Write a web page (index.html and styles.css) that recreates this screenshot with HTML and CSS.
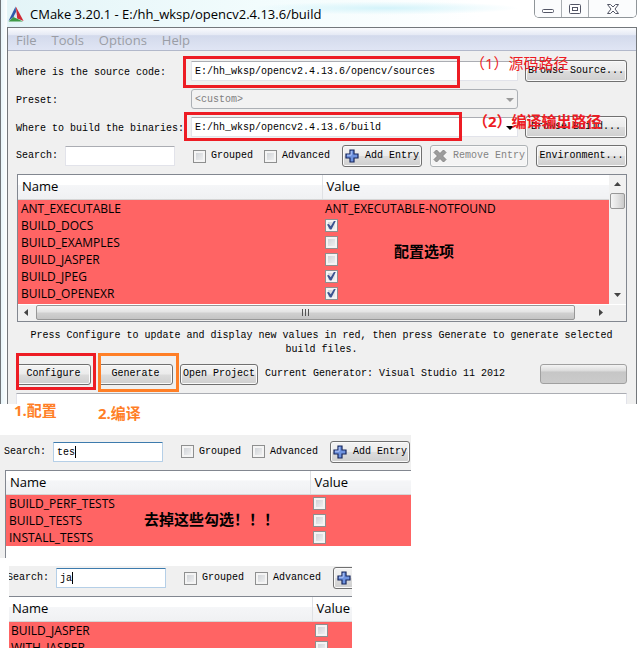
FILE: index.html
```html
<!DOCTYPE html>
<html lang="zh-CN">
<head>
    <meta charset="UTF-8">
    <meta name="viewport" content="width=device-width, initial-scale=1.0">
    <title>CMake 3.20.1 - OpenCV</title>
    <link rel="stylesheet" href="styles.css">
</head>
<body>
    <svg width="0" height="0" class="defs">
        <symbol id="plus" viewBox="0 0 14 14">
            <path d="M5 1h4v4h4v4H9v4H5V9H1V5h4z" fill="#6f93e0" stroke="#16265c" stroke-width="1.2"/>
            <path d="M6.2 2v4.2H2" fill="none" stroke="#b4c9f7"/>
        </symbol>
    </svg>

    <div class="window">
        <div class="titlebar">
            <svg class="logo" width="16" height="16" viewBox="0 0 16 16">
                <path d="M7.6 0.5L0.5 15l7.800-6.200z" fill="#2f58a8"/>
                <path d="M7.8 0.5L15.6 15 9.2 12.6z" fill="#cf2a35"/>
                <path d="M0.5 15.4l5-4.400L15 15.4z" fill="#3f9a46"/>
                <path d="M8 6l1 6-3.400-1.400z" fill="#dfe6ee"/>
            </svg>
            <h1 class="title">CMake 3.20.1 - E:/hh_wksp/opencv2.4.13.6/build</h1>
            <div class="controls">
                <button class="control" aria-label="Minimize">
                    <svg width="14" height="12" viewBox="0 0 14 12"><rect x="1.5" y="6.5" width="11" height="3" rx="1" fill="#fff" stroke="#535666"/></svg>
                </button>
                <button class="control" aria-label="Maximize">
                    <svg width="14" height="12" viewBox="0 0 14 12"><rect x="1.5" y="1.5" width="11" height="9" rx="1" fill="#fff" stroke="#535666"/><rect x="4.5" y="4.5" width="5" height="3" fill="#fff" stroke="#535666"/></svg>
                </button>
                <button class="control control-close" aria-label="Close">
                    <svg width="14" height="12" viewBox="0 0 14 12"><path d="M1.5 1.5h3L7 4l2.500-2.500h3L9 6l3.500 4.500h-3L7 8l-2.500 2.500h-3L5 6z" fill="#fff" stroke="#535666"/></svg>
                </button>
            </div>
        </div>

        <div class="client">
            <nav class="menubar">
                <a href="#">File</a>
                <a href="#">Tools</a>
                <a href="#">Options</a>
                <a href="#">Help</a>
            </nav>

            <div class="content">
                <div class="paths">
                    <label for="source">Where is the source code:</label>
                    <div class="field">
                        <input class="textbox" id="source" type="text" value="E:/hh_wksp/opencv2.4.13.6/opencv/sources">
                        <div class="mark mark-source"></div>
                        <span class="note note-source">（1）源码路径</span>
                    </div>
                    <button class="btn">Browse Source...</button>

                    <label for="preset">Preset:</label>
                    <div class="field combo combo-disabled">
                        <select class="textbox" id="preset" disabled><option>&lt;custom&gt;</option></select>
                    </div>
                    <span></span>

                    <label for="binaries">Where to build the binaries:</label>
                    <div class="field combo">
                        <select class="textbox" id="binaries"><option>E:/hh_wksp/opencv2.4.13.6/build</option></select>
                        <div class="mark mark-build"></div>
                        <span class="note note-build">（2）编译输出路径</span>
                    </div>
                    <button class="btn">Browse Build...</button>
                </div>

                <div class="toolbar">
                    <label class="search-label" for="search1">Search:</label>
                    <div class="search"><input class="textbox" id="search1" type="text"></div>
                    <label class="check"><input type="checkbox">Grouped</label>
                    <label class="check"><input type="checkbox">Advanced</label>
                    <button class="btn btn-add"><svg width="14" height="14"><use href="#plus"/></svg>Add Entry</button>
                    <button class="btn btn-remove" disabled>
                        <svg width="14" height="14" viewBox="0 0 14 14"><path d="M1 3.500L3.500 1 7 4.500 10.500 1 13 3.500 9.500 7l3.500 3.500-2.500 2.500L7 9.500 3.500 13 1 10.500 4.500 7z" fill="#9c9c9c" stroke="#858585"/></svg>Remove Entry</button>
                    <button class="btn btn-env">Environment...</button>
                </div>

                <div class="cache">
                    <div class="cache-view">
                        <table class="entries">
                            <thead>
                                <tr><th class="name">Name</th><th>Value</th></tr>
                            </thead>
                            <tbody>
                                <tr><td>ANT_EXECUTABLE</td><td>ANT_EXECUTABLE-NOTFOUND</td></tr>
                                <tr><td>BUILD_DOCS</td><td><input type="checkbox" aria-label="BUILD_DOCS" checked></td></tr>
                                <tr><td>BUILD_EXAMPLES</td><td><input type="checkbox" aria-label="BUILD_EXAMPLES"></td></tr>
                                <tr><td>BUILD_JASPER</td><td><input type="checkbox" aria-label="BUILD_JASPER"></td></tr>
                                <tr><td>BUILD_JPEG</td><td><input type="checkbox" aria-label="BUILD_JPEG" checked></td></tr>
                                <tr><td>BUILD_OPENEXR</td><td><input type="checkbox" aria-label="BUILD_OPENEXR" checked></td></tr>
                            </tbody>
                        </table>
                        <span class="note note-options">配置选项</span>
                    </div>
                    <div class="vscroll">
                        <svg width="7" height="4" viewBox="0 0 7 4"><path d="M0 4l3.500-4L7 4z" fill="#444"/></svg>
                        <div class="vthumb"></div>
                        <svg class="down" width="7" height="4" viewBox="0 0 7 4"><path d="M0 0l3.500 4L7 0z" fill="#444"/></svg>
                    </div>
                    <div class="hscroll">
                        <svg width="4" height="7" viewBox="0 0 4 7"><path d="M4 0L0 3.500 4 7z" fill="#444"/></svg>
                        <div class="hthumb"><i></i><i></i><i></i></div>
                        <svg width="4" height="7" viewBox="0 0 4 7"><path d="M0 0l4 3.500L0 7z" fill="#444"/></svg>
                    </div>
                </div>

                <p class="hint">Press Configure to update and display new values in red, then press Generate to generate selected build files.</p>

                <div class="actions">
                    <div class="step">
                        <button class="btn">Configure</button>
                        <div class="mark mark-configure"></div>
                    </div>
                    <div class="step">
                        <button class="btn">Generate</button>
                        <div class="mark mark-generate"></div>
                    </div>
                    <button class="btn btn-open">Open Project</button>
                    <span>Current Generator: Visual Studio 11 2012</span>
                    <div class="progress"></div>
                </div>

                <div class="output"></div>
            </div>
        </div>
    </div>

    <div class="steps">
        <span class="note">1.配置</span>
        <span class="note note-second">2.编译</span>
    </div>

    <div class="panel panel-tests">
        <div class="toolbar">
            <label class="search-label" for="search2">Search:</label>
            <div class="search active"><input class="textbox" id="search2" type="text" value="tes"><i class="caret caret-tes"></i></div>
            <label class="check"><input type="checkbox">Grouped</label>
            <label class="check"><input type="checkbox">Advanced</label>
            <button class="btn btn-add"><svg width="14" height="14"><use href="#plus"/></svg>Add Entry</button>
        </div>
        <div class="result">
            <table class="entries">
                <thead>
                    <tr><th class="name">Name</th><th>Value</th></tr>
                </thead>
                <tbody>
                    <tr><td>BUILD_PERF_TESTS</td><td><input type="checkbox" aria-label="BUILD_PERF_TESTS"></td></tr>
                    <tr><td>BUILD_TESTS</td><td><input type="checkbox" aria-label="BUILD_TESTS"></td></tr>
                    <tr><td>INSTALL_TESTS</td><td><input type="checkbox" aria-label="INSTALL_TESTS"></td></tr>
                </tbody>
            </table>
            <span class="note note-uncheck">去掉这些勾选！！！</span>
        </div>
    </div>

    <div class="panel panel-jasper">
        <div class="toolbar">
            <label class="search-label" for="search3">Search:</label>
            <div class="search active"><input class="textbox" id="search3" type="text" value="ja"><i class="caret caret-ja"></i></div>
            <label class="check"><input type="checkbox">Grouped</label>
            <label class="check"><input type="checkbox">Advanced</label>
            <button class="btn btn-add" aria-label="Add Entry"><svg width="14" height="14"><use href="#plus"/></svg></button>
        </div>
        <div class="result">
            <table class="entries">
                <thead>
                    <tr><th class="name">Name</th><th>Value</th></tr>
                </thead>
                <tbody>
                    <tr><td>BUILD_JASPER</td><td><input type="checkbox" aria-label="BUILD_JASPER"></td></tr>
                    <tr><td>WITH_JASPER</td><td><input type="checkbox" aria-label="WITH_JASPER"></td></tr>
                </tbody>
            </table>
        </div>
    </div>
</body>
</html>
```
FILE: styles.css
```css
* {
    box-sizing: border-box;
}

body {
    margin: 0;
    height: 100vh;
    overflow: hidden;
    background: #fff;
    color: #000;
    font: 10px/14px "Liberation Mono", "Noto Sans CJK SC", monospace;
}

button, input, select {
    font: inherit;
    color: inherit;
    margin: 0;
}

.defs {
    position: absolute;
}

/* window frame */
.window {
    padding: 0 4px 0 6px;
    border-left: 1px solid #6f7478;
    background: linear-gradient(90deg, #e8f5fa, #fdfefe 6px, #fff);
}

.titlebar {
    display: flex;
    align-items: center;
    height: 27px;
    background: radial-gradient(ellipse at 60% 30%, #d3f3fa, transparent 25%), linear-gradient(90deg, #e3f4f7, #f2fcfd 40%, #fff 75%);
}

.logo {
    margin-left: 1px;
}

.title {
    flex: 1;
    margin: 0 0 0 6px;
    font: 13px/24px "Open Sans", sans-serif;
    white-space: nowrap;
}

.controls {
    display: flex;
    align-self: flex-start;
    height: 18px;
    border: 1px solid #8f9599;
    border-top: 0;
    border-radius: 0 0 5px 5px;
    overflow: hidden;
}

.control {
    display: flex;
    align-items: center;
    justify-content: center;
    width: 27px;
    padding: 0;
    border: 0;
    border-right: 1px solid #a9aeb2;
    background: #fbfcfd;
}

.control-close {
    width: 47px;
    border-right: 0;
}

.client {
    border: 1px solid #73777b;
    border-bottom: 0;
    background: #f0f0f0;
}

.menubar {
    display: flex;
    gap: 15px;
    height: 23px;
    padding-left: 8px;
    border-bottom: 1px solid #b2b8ca;
    background: linear-gradient(#fafbfd, #e6eaf5 30%, #d3daec 35%, #e0e5f4);
    font: 13px/24px "Open Sans", sans-serif;
}

.menubar a {
    color: #9a9da5;
    text-decoration: none;
}

.content {
    padding: 9px 9px 0 8px;
}

/* inputs */
.paths {
    display: grid;
    grid-template-columns: 168px 1fr 102px;
    column-gap: 7px;
    row-gap: 7px;
    align-items: center;
    white-space: nowrap;
}

.paths label {
    padding-top: 3px;
}

.field {
    position: relative;
}

.textbox {
    display: block;
    width: 100%;
    height: 20px;
    padding: 1px 3px 0;
    border: 1px solid #e2e3ea;
    border-top-color: #abadb3;
    border-radius: 1px;
    background: #fff;
    outline: 0;
    appearance: none;
}

.combo::after {
    content: "";
    position: absolute;
    right: 4px;
    top: 9px;
    border: 4px solid transparent;
    border-top-color: #000;
    border-bottom: 0;
}

.combo-disabled::after {
    border-top-color: #9a9a9a;
}

.combo-disabled .textbox {
    border-color: #acb0b5;
    border-radius: 3px;
    background: #f2f2f2;
    color: #7f7f7f;
    opacity: 1;
}

.btn {
    display: flex;
    align-items: center;
    justify-content: center;
    gap: 6px;
    height: 22px;
    padding: 0;
    border: 1px solid #707070;
    border-radius: 3px;
    background: linear-gradient(#f3f3f3, #ebebeb 48%, #dcdcdc 52%, #cfcfcf);
    box-shadow: inset 0 0 0 1px #fafafa;
    white-space: nowrap;
}

.btn:disabled {
    border-color: #adb2b5;
    background: #f4f4f4;
    color: #838383;
}

.toolbar {
    display: flex;
    align-items: center;
    height: 22px;
}

.search-label {
    flex: 0 0 49px;
}

.search {
    position: relative;
    flex: 0 0 110px;
    margin-right: 18px;
}

.active .textbox {
    border-color: #b5cfe7;
    border-top-color: #3d7bad;
}

.caret {
    position: absolute;
    top: 4px;
    width: 1px;
    height: 12px;
    background: #000;
}

.caret-tes {
    left: 22px;
}

.caret-ja {
    left: 16px;
}

.check {
    display: flex;
    align-items: center;
    gap: 5px;
    margin-right: 11px;
}

input[type="checkbox"] {
    display: block;
    width: 13px;
    height: 13px;
    border: 1px solid #8e8f8f;
    background: linear-gradient(135deg, #c9cdd2, #f6f6f6);
    box-shadow: inset 0 0 0 2px #f4f4f4;
    appearance: none;
}

input[type="checkbox"]:checked::before {
    content: "";
    display: block;
    width: 9px;
    height: 9px;
    margin: 1px;
    background: #3c5491;
    clip-path: polygon(0 45%, 20% 38%, 42% 64%, 80% 0, 100% 0, 50% 100%, 32% 100%);
}

.btn-add {
    flex: 0 0 80px;
    margin-left: 1px;
}

.btn-remove {
    flex: 0 0 98px;
    margin: 0 8px;
}

.btn-env {
    flex: 1;
}

.content .toolbar {
    margin-top: 7px;
}

/* cache entries */
.cache {
    display: grid;
    grid-template-columns: 1fr 17px;
    margin: 7px 0 0 1px;
    border: 1px solid #828790;
    background: #fff;
}

.cache-view {
    position: relative;
    padding-bottom: 2px;
    background: #ff6464;
}

.entries {
    width: 100%;
    border-collapse: collapse;
    table-layout: fixed;
    font: 12px/17px "Open Sans", sans-serif;
}

.entries th {
    height: 24px;
    padding: 0 4px;
    border-bottom: 1px solid #d5d5d5;
    background: linear-gradient(#fff 40%, #f5f6f8 42%, #f0f1f3);
    font-size: 13px;
    font-weight: normal;
    text-align: left;
}

.entries .name {
    width: 304px;
    border-right: 1px solid #dfe1e4;
}

.entries td {
    height: 17px;
    padding: 0 3px;
    background: #ff6464;
}

.vscroll {
    display: flex;
    flex-direction: column;
    align-items: center;
    padding: 7px 0;
    background: #f1f1f1;
}

.vthumb {
    width: 15px;
    height: 16px;
    margin-top: 7px;
    border: 1px solid #979797;
    border-radius: 2px;
    background: linear-gradient(90deg, #f5f5f5, #e2e2e2 50%, #cacaca);
}

.down {
    margin-top: auto;
}

.hscroll {
    grid-column: 1 / 3;
    display: flex;
    align-items: center;
    height: 17px;
    padding: 0 23px 0 6px;
    border-top: 1px solid #fff;
    background: #f0f0f0;
}

.hthumb {
    display: flex;
    flex: 1;
    align-items: center;
    justify-content: center;
    gap: 2px;
    height: 15px;
    margin: 0 24px 0 8px;
    border: 1px solid #979797;
    border-radius: 2px;
    background: linear-gradient(#f5f5f5, #e4e4e4 45%, #d0d0d0 55%, #c4c4c4);
}

.hthumb i {
    width: 1px;
    height: 7px;
    background: #555;
}

.hint {
    margin: 7px 0;
    text-align: center;
}

.actions {
    display: flex;
    align-items: center;
    gap: 7px;
    white-space: nowrap;
}

.actions .btn {
    height: 21px;
}

.step {
    position: relative;
    flex: 0 0 75px;
}

.step .btn {
    width: 100%;
}

.btn-open {
    flex: 0 0 78px;
}

.progress {
    flex: 0 0 87px;
    height: 20px;
    margin-left: auto;
    border: 1px solid #a0a0a0;
    border-radius: 3px;
    background: linear-gradient(#f4f4f4, #dedede 30%, #c6c6c6 40%, #cbcbcb);
}

.output {
    height: 11px;
    margin-top: 8px;
    border: 1px solid #e2e3ea;
    border-top-color: #abadb3;
    border-bottom: 0;
    background: #fff;
}

/* hand-drawn marks and notes */
.mark {
    position: absolute;
    border: 3px solid #ed1c24;
    pointer-events: none;
}

.mark-source {
    inset: -5px 58px -7px -8px;
}

.mark-build {
    inset: -5px 56px -4px -7px;
}

.mark-configure {
    inset: -11px -5px -5px 0;
}

.mark-generate {
    inset: -11px -6px -7px 0;
    border-color: #ff7f27;
}

.note {
    font: bold 15px/20px "Open Sans", "Noto Sans CJK SC", sans-serif;
    text-spacing-trim: space-all;
    white-space: nowrap;
}

.note-source, .note-build {
    position: absolute;
    z-index: 1;
    color: #ed1c24;
}

.note-source {
    left: 279px;
    top: -8px;
    font-weight: normal;
}

.note-build {
    left: 282px;
    top: -6px;
}

.note-options {
    position: absolute;
    left: 376px;
    top: 66px;
}

.steps {
    display: flex;
    height: 31px;
    padding-left: 14px;
    color: #ff7f27;
}

.steps .note {
    width: 84px;
    line-height: 12px;
}

.steps .note-second {
    line-height: 18px;
}

/* search results */
.panel {
    overflow: hidden;
    background: #f0f0f0;
}

.panel-tests {
    width: 411px;
    padding: 6px 0 0 4px;
}

.panel-jasper {
    width: 343px;
    margin: 8px 0 0 9px;
    padding-top: 1px;
}

.panel-jasper .toolbar, .panel-jasper .result {
    margin-left: -2px;
}

.panel-jasper .btn-add {
    justify-content: flex-start;
    padding-left: 3px;
}

.result {
    position: relative;
    margin-top: 7px;
    border: 1px solid #828790;
    border-width: 1px 0 0 1px;
    background: #fff;
}

.panel-tests .result {
    margin-left: 1px;
    padding-bottom: 12px;
}

.note-uncheck {
    position: absolute;
    left: 138px;
    top: 38px;
}
```
